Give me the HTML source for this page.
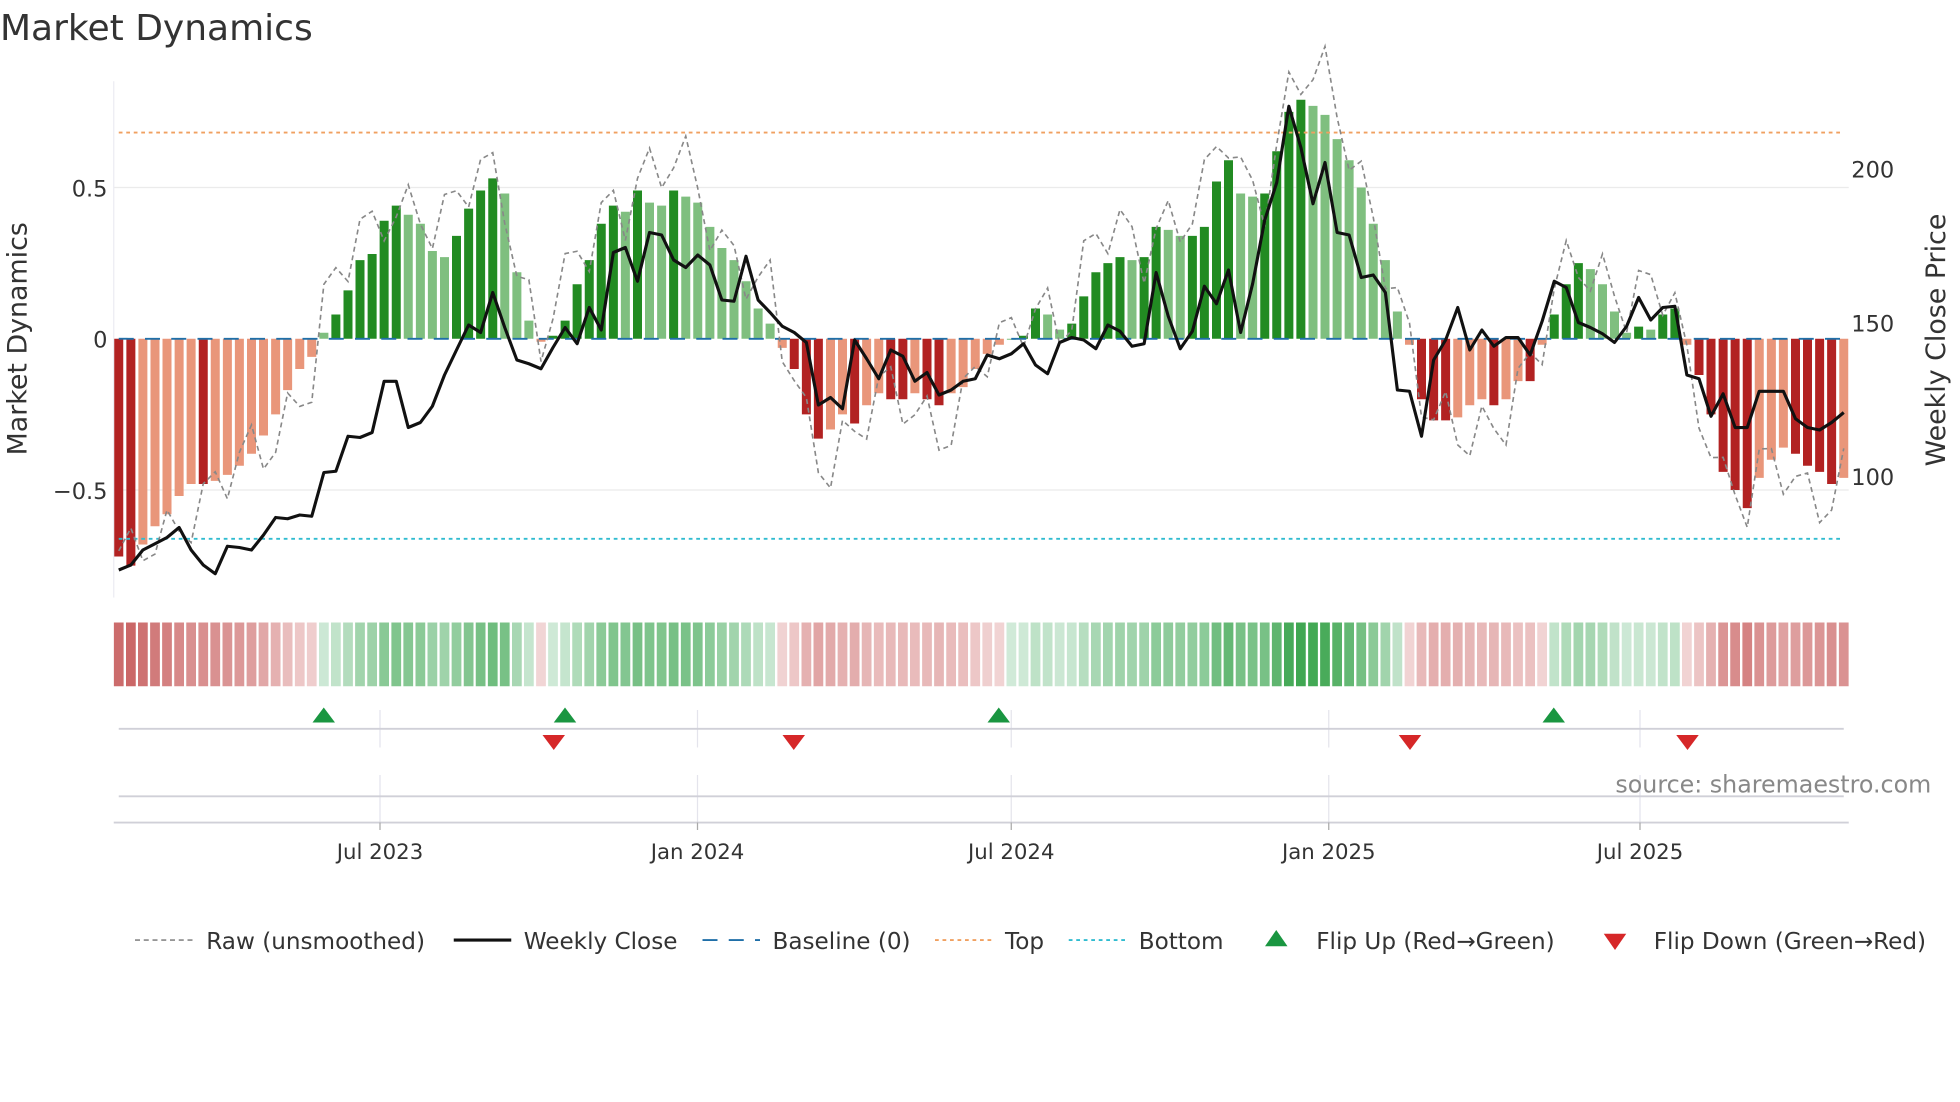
<!DOCTYPE html>
<html><head><meta charset="utf-8"><style>
html,body{margin:0;padding:0;background:#fff;}
svg{display:block;font-family:"DejaVu Sans","Liberation Sans",sans-serif;}
</style></head><body>
<svg id="s" width="1960" height="1102" viewBox="0 0 1568 881.6" xmlns="http://www.w3.org/2000/svg">
<rect width="1568" height="881.6" fill="#fff"/>
<text x="0" y="32" font-size="28.8" fill="#333">Market Dynamics</text>
<line x1="91" y1="150" x2="1479" y2="150" stroke="#ebebeb" stroke-width="1"/>
<line x1="91" y1="392" x2="1479" y2="392" stroke="#ebebeb" stroke-width="1"/>
<line x1="91" y1="65" x2="91" y2="478" stroke="#ebebf2" stroke-width="1"/>
<g id="bars"></g>
<line x1="95" y1="106" x2="1475" y2="106" stroke="#f0a060" stroke-width="1.5" stroke-dasharray="3,3"/>
<line x1="95" y1="431" x2="1475" y2="431" stroke="#30bcd0" stroke-width="1.5" stroke-dasharray="3,3"/>
<line x1="95" y1="271" x2="1475" y2="271" stroke="#1f6fa8" stroke-width="1.5" stroke-dasharray="12,9"/>
<polyline id="raw" fill="none" stroke="#888" stroke-width="1.3" stroke-dasharray="4,3"/>
<polyline id="price" fill="none" stroke="#111" stroke-width="2.5" stroke-linejoin="round"/>
<g font-size="18" fill="#333">
<text x="86" y="157" text-anchor="end">0.5</text>
<text x="86" y="278" text-anchor="end">0</text>
<text x="86" y="399" text-anchor="end">−0.5</text>
<text x="1481" y="142">200</text>
<text x="1481" y="265">150</text>
<text x="1481" y="388">100</text>
<text transform="translate(21,271) rotate(-90)" text-anchor="middle" font-size="21.5">Market Dynamics</text>
<text transform="translate(1556,272) rotate(-90)" text-anchor="middle" font-size="21.5">Weekly Close Price</text>
</g>
<g id="heat"></g>
<g stroke="#e4e4ec" stroke-width="1">
<line x1="304" y1="568" x2="304" y2="598"/><line x1="558" y1="568" x2="558" y2="598"/><line x1="809" y1="568" x2="809" y2="598"/><line x1="1063" y1="568" x2="1063" y2="598"/><line x1="1312" y1="568" x2="1312" y2="598"/>
<line x1="304" y1="620" x2="304" y2="658"/><line x1="558" y1="620" x2="558" y2="658"/><line x1="809" y1="620" x2="809" y2="658"/><line x1="1063" y1="620" x2="1063" y2="658"/><line x1="1312" y1="620" x2="1312" y2="658"/>
</g>
<line x1="95" y1="583" x2="1475" y2="583" stroke="#d0d0d8" stroke-width="1.5"/>
<line x1="95" y1="637" x2="1475" y2="637" stroke="#d0d0d8" stroke-width="1.5"/>
<line x1="91" y1="658" x2="1479" y2="658" stroke="#d0d0d8" stroke-width="1.5"/>
<g id="marks"></g>
<text x="1545" y="634" font-size="19" fill="#888" text-anchor="end">source: sharemaestro.com</text>
<g stroke="#aaa" stroke-width="1"><line x1="304" y1="658" x2="304" y2="664"/><line x1="558" y1="658" x2="558" y2="664"/><line x1="809" y1="658" x2="809" y2="664"/><line x1="1063" y1="658" x2="1063" y2="664"/><line x1="1312" y1="658" x2="1312" y2="664"/></g>
<g font-size="17" fill="#333" text-anchor="middle">
<text x="304" y="687">Jul 2023</text><text x="558" y="687">Jan 2024</text><text x="809" y="687">Jul 2024</text><text x="1063" y="687">Jan 2025</text><text x="1312" y="687">Jul 2025</text>
</g>
<g font-size="18.5" fill="#333">
<line x1="108" y1="752" x2="154" y2="752" stroke="#888" stroke-width="1.3" stroke-dasharray="4,3"/>
<text x="165" y="759">Raw (unsmoothed)</text>
<line x1="363" y1="752" x2="409" y2="752" stroke="#111" stroke-width="2.5"/>
<text x="419" y="759">Weekly Close</text>
<line x1="562" y1="752" x2="608" y2="752" stroke="#1f6fa8" stroke-width="1.5" stroke-dasharray="12,9"/>
<text x="618" y="759">Baseline (0)</text>
<line x1="748" y1="752" x2="794" y2="752" stroke="#f0a060" stroke-width="1.5" stroke-dasharray="3,3"/>
<text x="804" y="759">Top</text>
<line x1="855" y1="752" x2="901" y2="752" stroke="#30bcd0" stroke-width="1.5" stroke-dasharray="3,3"/>
<text x="911" y="759">Bottom</text>
<polygon points="1012,757 1030,757 1021,744" fill="#1a9641"/>
<text x="1053" y="759">Flip Up (Red→Green)</text>
<polygon points="1283,747 1301,747 1292,760" fill="#d62728"/>
<text x="1323" y="759">Flip Down (Green→Red)</text>
</g>
</svg>
<script>
var v=[-0.72,-0.75,-0.68,-0.62,-0.58,-0.52,-0.48,-0.48,-0.47,-0.45,-0.42,-0.38,-0.32,-0.25,-0.17,-0.1,-0.06,0.02,0.08,0.16,0.26,0.28,0.39,0.44,0.41,0.38,0.29,0.27,0.34,0.43,0.49,0.53,0.48,0.22,0.06,-0.01,0.01,0.06,0.18,0.26,0.38,0.44,0.42,0.49,0.45,0.44,0.49,0.47,0.45,0.37,0.3,0.26,0.19,0.1,0.05,-0.03,-0.1,-0.25,-0.33,-0.3,-0.25,-0.28,-0.22,-0.18,-0.2,-0.2,-0.18,-0.2,-0.22,-0.18,-0.16,-0.1,-0.05,-0.02,0.0,0.01,0.1,0.08,0.03,0.05,0.14,0.22,0.25,0.27,0.26,0.27,0.37,0.36,0.34,0.34,0.37,0.52,0.59,0.48,0.47,0.48,0.62,0.75,0.79,0.77,0.74,0.66,0.59,0.5,0.38,0.26,0.09,-0.02,-0.2,-0.27,-0.27,-0.26,-0.22,-0.2,-0.22,-0.2,-0.14,-0.14,-0.02,0.08,0.18,0.25,0.23,0.18,0.09,0.02,0.04,0.03,0.08,0.1,-0.02,-0.12,-0.25,-0.44,-0.5,-0.56,-0.46,-0.4,-0.36,-0.38,-0.42,-0.44,-0.48,-0.46];
var p=[456,452,440,435,430,422,440,452,459,437,438,440,428,414,415,412,413,378,377,349,350,346,305,305,342,338,325,300,280,260,266,234,262,288,291,295,278,262,275,246,264,202,198,225,186,188,208,214,204,212,240,241,205,240,250,261,266,274,324,318,327,272,287,303,280,285,305,298,316,312,305,303,284,287,283,275,292,299,274,270,272,279,260,265,277,275,218,253,279,265,229,243,216,266,227,176,146,85,118,163,130,186,188,222,220,234,312,313,349,288,272,246,280,264,277,270,270,284,257,225,230,258,262,267,274,261,238,256,246,245,300,303,333,315,342,342,313,313,313,335,342,344,338,330];
var NS="http://www.w3.org/2000/svg",n=v.length,dx=(1475-95)/(n-1);
function el(t,a,par){var e=document.createElementNS(NS,t);for(var k in a)e.setAttribute(k,a[k]);document.getElementById(par).appendChild(e);}
var rp=[],pp=[];
for(var i=0;i<n;i++){
 var x=95+i*dx,val=v[i],y=271-val*242;
 var dark=i==0||Math.abs(val)>=Math.abs(v[i-1]);
 var c=val>=0?(dark?"#228b22":"#7fbf7f"):(dark?"#b22222":"#e9967a");
 el("rect",{x:(x-3.6).toFixed(1),y:Math.min(y,271).toFixed(1),width:7.2,height:Math.max(Math.abs(val*242),0.8).toFixed(1),fill:c},"bars");
 var t=Math.min(Math.abs(val)/0.8,1);
 var a,b;
 if(val>=0){a=[208,234,216];b=[62,166,80];}else{a=[242,214,214];b=[200,96,96];}
 var hc="rgb("+[0,1,2].map(function(j){return Math.round(a[j]+(b[j]-a[j])*t)}).join(",")+")";
 el("rect",{x:(x-3.9).toFixed(1),y:498,width:7.8,height:51,fill:hc},"heat");
 var rv=val+0.1*Math.sin(i*1.9)+0.07*Math.sin(i*0.7+1)+(val>0?0.06:-0.04);
 rp.push(x.toFixed(1)+","+(271-rv*242).toFixed(1));
 pp.push(x.toFixed(1)+","+p[i]);
}
document.getElementById("raw").setAttribute("points",rp.join(" "));
document.getElementById("price").setAttribute("points",pp.join(" "));
[259,452,799,1243].forEach(function(x){el("polygon",{points:(x-9)+",578 "+(x+9)+",578 "+x+",566",fill:"#1a9641"},"marks");});
[443,635,1128,1350].forEach(function(x){el("polygon",{points:(x-9)+",588 "+(x+9)+",588 "+x+",600",fill:"#d62728"},"marks");});
</script>
</body></html>
